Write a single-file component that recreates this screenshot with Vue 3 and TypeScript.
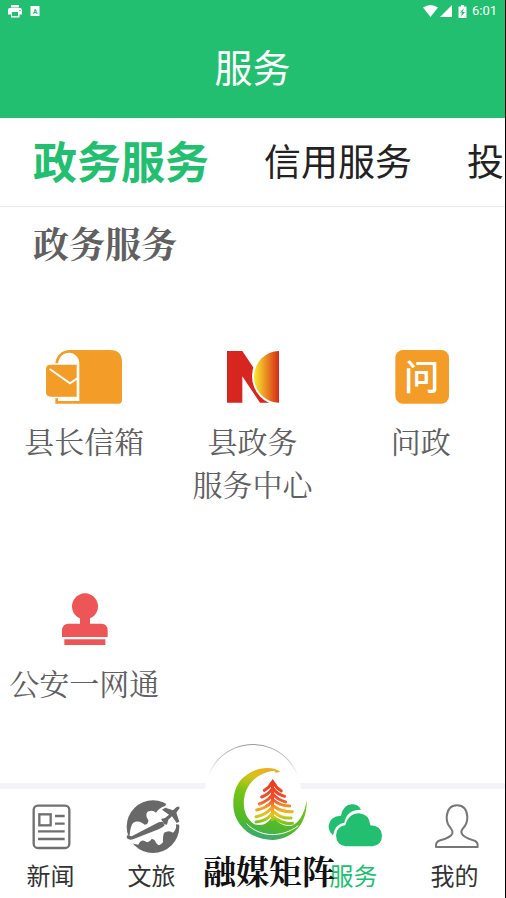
<script setup lang="ts">
import { ref } from 'vue'

type ServiceIcon = 'mailbox' | 'center' | 'ask' | 'stamp'
type NavIcon = 'news' | 'travel' | 'media' | 'service' | 'mine'

interface Service {
  icon: ServiceIcon
  lines: string[]
}

interface NavItem {
  icon: NavIcon
  label: string
}

const tabs: string[] = ['政务服务', '信用服务', '投']
const activeTab = ref(0)

const services: Service[] = [
  { icon: 'mailbox', lines: ['县长信箱'] },
  { icon: 'center', lines: ['县政务', '服务中心'] },
  { icon: 'ask', lines: ['问政'] },
  { icon: 'stamp', lines: ['公安一网通'] },
]

const navItems: NavItem[] = [
  { icon: 'news', label: '新闻' },
  { icon: 'travel', label: '文旅' },
  { icon: 'media', label: '融媒矩阵' },
  { icon: 'service', label: '服务' },
  { icon: 'mine', label: '我的' },
]
const activeNav = ref<NavIcon>('service')
</script>

<template>
  <div class="page">
    <header class="header">
      <div class="status">
        <div class="status-group left">
          <svg width="14" height="13" viewBox="0 0 28 26">
            <path fill="#fff" d="M6 0h16v5H6zM4 6h20q4 0 4 4v9h-5v6H6v-6H0v-9q0-4 4-4z" />
            <path fill="#22bf70" d="M8 14h12v8H8z" />
            <circle cx="24" cy="11" r="1.5" fill="#22bf70" />
          </svg>
          <svg width="10" height="10" viewBox="0 0 20 20">
            <rect x="1" width="18" height="20" rx="1" fill="#fff" />
            <text class="badge-letter" x="10" y="15" text-anchor="middle">A</text>
          </svg>
        </div>
        <div class="status-group">
          <svg width="15" height="12" viewBox="0 0 30 24">
            <path fill="#fff" d="M0 5Q15-5 30 5L15 24z" />
          </svg>
          <svg width="12" height="12" viewBox="0 0 24 24">
            <path fill="#fff" d="M24 0v24H0z" />
          </svg>
          <svg class="battery" width="9" height="13" viewBox="0 0 18 26">
            <path fill="#fff" d="M6 0h6v3h4q1 0 1 1v21q0 1-1 1H2q-1 0-1-1V4q0-1 1-1h4z" />
            <path fill="#22bf70" d="M12 6L4 15h4l-2 8 8-9H9z" />
          </svg>
          <span class="time">6:01</span>
        </div>
      </div>
      <h1 class="title">服务</h1>
    </header>

    <div class="tabs" role="tablist">
      <button
        v-for="(tab, i) in tabs"
        :key="tab"
        type="button"
        role="tab"
        class="tab"
        :class="{ active: activeTab === i }"
        :aria-selected="activeTab === i"
        @click="activeTab = i"
      >{{ tab }}</button>
    </div>

    <main class="content">
      <h2 class="section-title">政务服务</h2>
      <div class="grid">
        <a v-for="item in services" :key="item.icon" href="#" class="service">
          <svg v-if="item.icon === 'mailbox'" class="service-icon" viewBox="126 60 252 162">
            <path
              fill="#f39c27"
              fill-rule="evenodd"
              d="M166 100C169 76 186 60 210 60H330Q366 60 366 97V210Q366 221 355 221H166V205H174V213H238V101C238 80 223 68 207 68C189 68 177 81 174 100Z"
            />
            <path fill="#f39c27" d="M152 104H230V200H152Q138 200 138 187V117Q138 104 152 104Z" />
            <path fill="none" stroke="#fff" stroke-width="6" d="M149 117L210 160L232 145" />
          </svg>
          <svg v-else-if="item.icon === 'center'" class="service-icon" viewBox="630 60 252 162">
            <defs>
              <linearGradient id="sun">
                <stop offset="0" stop-color="#fbe92f" />
                <stop offset="0.2" stop-color="#f3c52a" />
                <stop offset="0.7" stop-color="#e2631d" />
                <stop offset="1" stop-color="#d32a18" />
              </linearGradient>
            </defs>
            <path fill="#d6261f" d="M681 63H727L765 120L825 218H780L727 139V218H681Z" />
            <ellipse cx="838" cy="138" rx="82" ry="87" fill="#fff" />
            <path fill="url(#sun)" d="M837 63A75 77.5 0 0 0 762 140.5A75 77.5 0 0 0 837 218Z" />
          </svg>
          <svg v-else-if="item.icon === 'ask'" class="service-icon" viewBox="378 60 252 162">
            <rect x="427" y="60" width="161" height="161" rx="23" fill="#f39c27" />
            <text class="ask-char" x="506" y="180" text-anchor="middle">问</text>
          </svg>
          <svg v-else class="service-icon" viewBox="126 36 252 162">
            <path
              fill="#ee5557"
              d="M240 115A39 39 0 1 1 270 115V131H304Q323 132 323 151V171H186V151Q187 132 206 131H240Z"
            />
            <path fill="#ee5557" d="M193 178H316V195H193Z" />
          </svg>
          <span class="service-label">
            <span v-for="line in item.lines" :key="line" class="line">{{ line }}</span>
          </span>
        </a>
      </div>
    </main>

    <nav class="nav">
      <button
        v-for="item in navItems"
        :key="item.icon"
        type="button"
        class="nav-item"
        :class="{ active: activeNav === item.icon, media: item.icon === 'media' }"
        @click="activeNav = item.icon"
      >
        <svg v-if="item.icon === 'news'" class="nav-icon" viewBox="68 72 168 168">
          <g fill="none" stroke="#707070" stroke-width="7">
            <rect x="100" y="92" width="107" height="127" rx="13" />
            <rect x="117" y="118" width="34" height="33" />
            <path d="M164 123H193M164 146H193M113 169H193M113 192H193" />
          </g>
        </svg>
        <svg v-else-if="item.icon === 'travel'" class="nav-icon" viewBox="370 72 168 168">
          <circle cx="457" cy="155" r="79" fill="#686868" />
          <path
            fill="#fff"
            d="M386 188Q389 150 398 143C412 135 424 143 432 149C438 149 443 146 443 135C436 126 434 113 444 109Q457 104 466 113Q476 98 493 93L509 70L552 75V150L526 148Q528 164 517 173Q505 164 490 173Q486 184 487 202Q474 219 465 202Q463 193 453 192Q443 207 432 198Q421 193 413 209L398 206L370 202V180Z"
          />
          <path
            fill="#686868"
            d="M379 181L393 184L474 142Q483 138 487 142L492 151Q487 158 474 163L397 193Q386 196 378 189Z"
          />
          <path
            fill="#686868"
            d="M491 148L481 132L493 129L505 119L484 104L494 98L517 106L527 97Q536 91 537 99L527 113L536 140L528 144L514 124L503 134L499 149Z"
          />
        </svg>
        <svg v-else-if="item.icon === 'service'" class="nav-icon" viewBox="46 72 168 168">
          <path
            fill="#23bf71"
            d="M104 214Q77 210 76 181Q77 155 104 151Q113 115 146 115Q176 118 179 151Q211 151 214 181Q214 210 186 214Z"
          />
          <path
            fill="#23bf71"
            d="M67 181Q53 170 54 151Q58 124 91 122Q97 89 124 88Q143 88 151 104Q108 104 101 143Q73 147 67 181Z"
          />
        </svg>
        <svg v-else-if="item.icon === 'mine'" class="nav-icon" viewBox="349 72 168 168">
          <path
            fill="none"
            stroke="#777"
            stroke-width="6"
            stroke-linejoin="round"
            d="M376 216Q374 200 389 196Q421 187 425 175Q427 168 420 159Q408 147 408 126Q411 91 439 91Q468 91 470 126Q470 147 457 160Q450 168 453 175Q456 186 488 196Q503 200 501 216Z"
          />
        </svg>
        <template v-else>
          <span class="bubble"></span>
          <svg class="emblem" viewBox="39 90 396 234">
            <defs>
              <linearGradient id="ring" x1="0.65" y1="0" x2="0.4" y2="1">
                <stop offset="0" stop-color="#f6a51b" />
                <stop offset="0.2" stop-color="#d5c31c" />
                <stop offset="0.42" stop-color="#78c414" />
                <stop offset="0.8" stop-color="#4fb92b" />
                <stop offset="1" stop-color="#3ba77a" />
              </linearGradient>
              <linearGradient id="tree" gradientUnits="userSpaceOnUse" x1="0" y1="133" x2="0" y2="285">
                <stop offset="0" stop-color="#e8391f" />
                <stop offset="0.4" stop-color="#f2512b" />
                <stop offset="0.56" stop-color="#f79a23" />
                <stop offset="0.7" stop-color="#dfc820" />
                <stop offset="0.85" stop-color="#7fc41f" />
                <stop offset="1" stop-color="#45b52a" />
              </linearGradient>
            </defs>
            <path
              fill="url(#ring)"
              d="M272 110L253 101C213 94 177 108 153 134C137 153 129 178 130 212C132 270 184 315 247 315C307 313 353 268 350 196C343 241 325 266 303 273C275 273 262 262 248 242C236 264 220 274 193 268C168 250 157 222 163 187C170 145 205 112 253 107L257 113Z"
            />
            <path fill="none" stroke="#fff" stroke-width="3" d="M170 266C208 306 273 311 325 272" />
            <path fill="url(#tree)" d="M248 132L262 152L252 153V258H243V153L234 152Z" />
            <g fill="none" stroke="url(#tree)" stroke-width="9" stroke-linecap="round" stroke-linejoin="round">
              <path d="M246 144Q238 158 223 166M250 144Q259 159 274 168" />
              <path d="M246 162Q236 178 215 186M250 162Q262 178 284 184" />
              <path d="M246 180Q234 198 208 207M250 178Q264 195 287 201" />
              <path d="M246 199Q231 219 200 225M250 195Q270 213 299 213" />
              <path d="M246 218Q228 240 198 245M250 213Q274 232 307 230" />
              <path d="M246 236Q229 259 198 261M250 230Q274 252 303 249" />
              <path d="M251 246Q276 268 307 265" />
            </g>
          </svg>
        </template>
        <span class="nav-label">{{ item.label }}</span>
      </button>
    </nav>
  </div>
</template>

<style>
body {
  background: #fff;
}
</style>

<style scoped>
.page {
  box-sizing: border-box;
  min-height: 100vh;
  display: flex;
  flex-direction: column;
  overflow: hidden;
  border-right: 1px solid #000;
  background: #fff;
  font-family: "Noto Sans CJK SC", sans-serif;
}

button {
  margin: 0;
  padding: 0;
  border: 0;
  background: none;
  font-family: inherit;
  cursor: pointer;
}

.header {
  height: 118px;
  display: flex;
  flex-direction: column;
  background: #22bf70;
  color: #fff;
}

.status {
  height: 22px;
  padding: 0 8px;
  display: flex;
  align-items: center;
  justify-content: space-between;
}

.status-group {
  display: flex;
  align-items: center;
  gap: 2px;
}

.left {
  gap: 8px;
}

.battery {
  margin-left: 4px;
}

.badge-letter {
  font: bold 14px Roboto, sans-serif;
  fill: #22bf70;
}

.time {
  margin-left: 3px;
  font: 400 13px/22px Roboto, sans-serif;
}

.title {
  margin: 0;
  font-size: 38px;
  line-height: 88px;
  font-weight: 400;
  text-align: center;
}

.tabs {
  height: 88px;
  padding-left: 33px;
  display: flex;
  align-items: flex-start;
  gap: 55px;
  overflow: hidden;
  border-bottom: 1px solid #ececec;
}

.tab {
  flex: none;
  color: #222;
  font-size: 37px;
  line-height: 84px;
}

.tab.active {
  color: #22bf70;
  font-size: 44px;
  font-weight: 700;
}

.content {
  flex: 1;
  font-family: "Noto Serif CJK SC", "Source Han Serif SC", "Noto Serif SC", "Noto Sans CJK SC", serif;
  color: #606060;
}

.section-title {
  margin: 0;
  padding: 9px 33px 0;
  font-size: 36px;
  line-height: 54px;
  font-weight: 700;
}

.grid {
  padding-top: 80px;
  display: grid;
  grid-template-columns: repeat(3, 1fr);
  row-gap: 87px;
}

.service {
  display: flex;
  flex-direction: column;
  align-items: center;
  gap: 15px;
  color: inherit;
  text-decoration: none;
}

.service-icon {
  width: 84px;
  height: 54px;
}

.ask-char {
  font: 500 106px "Noto Sans CJK SC", sans-serif;
  fill: #fff;
}

.service-label {
  font-size: 30px;
  line-height: 43px;
  text-align: center;
  white-space: nowrap;
}

.line {
  display: block;
}

.nav {
  height: 109px;
  display: grid;
  grid-template-columns: repeat(5, 1fr);
  border-top: 6px solid #f3f3f8;
}

.nav-item {
  position: relative;
  min-width: 0;
  padding-top: 10px;
  display: flex;
  flex-direction: column;
  align-items: center;
  color: #333;
}

.nav-item.active {
  color: #22bf70;
}

.nav-icon {
  width: 56px;
  height: 56px;
}

.nav-label {
  font-size: 24px;
  line-height: 40px;
  white-space: nowrap;
}

.media {
  z-index: 1;
  padding: 0 0 0 1px;
  align-items: flex-start;
}

.bubble {
  position: absolute;
  top: -45px;
  left: 50%;
  box-sizing: border-box;
  width: 96px;
  height: 96px;
  margin-left: -48px;
  border: 1px solid transparent;
  border-radius: 50%;
  background:
    linear-gradient(#fff, #fff) padding-box,
    linear-gradient(#999, #fff 32px) border-box;
}

.emblem {
  position: relative;
  width: 132px;
  height: 78px;
  margin-top: -24px;
}

.media .nav-label {
  position: relative;
  color: #111;
  font-family: "Noto Serif CJK SC", "Noto Sans CJK SC", serif;
  font-size: 33px;
  font-weight: 700;
  line-height: 54px;
}
</style>
